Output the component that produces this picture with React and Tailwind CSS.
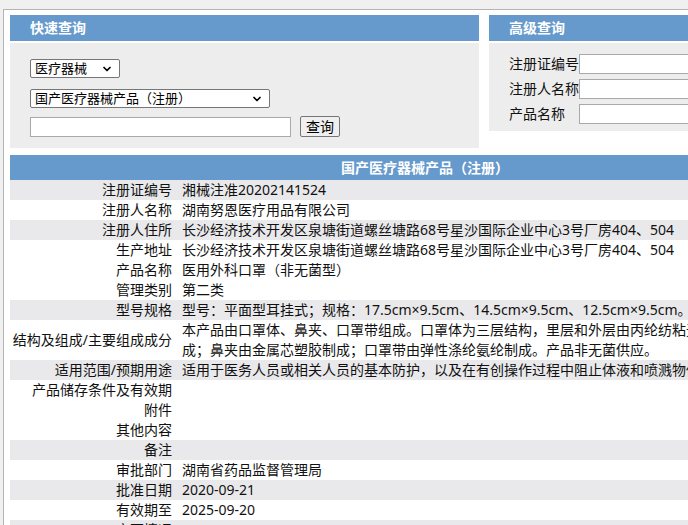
import React from 'react';
import { ChevronDown } from 'lucide-react';

const rows = [
  { label: '注册证编号', value: '湘械注准20202141524', gray: true },
  { label: '注册人名称', value: '湖南努恩医疗用品有限公司' },
  { label: '注册人住所', value: '长沙经济技术开发区泉塘街道螺丝塘路68号星沙国际企业中心3号厂房404、504', gray: true },
  { label: '生产地址', value: '长沙经济技术开发区泉塘街道螺丝塘路68号星沙国际企业中心3号厂房404、504' },
  { label: '产品名称', value: '医用外科口罩（非无菌型）' },
  { label: '管理类别', value: '第二类' },
  { label: '型号规格', value: '型号：平面型耳挂式；规格：17.5cm×9.5cm、14.5cm×9.5cm、12.5cm×9.5cm。', gray: true },
  {
    label: '结构及组成/主要组成成分',
    lines: [
      '本产品由口罩体、鼻夹、口罩带组成。口罩体为三层结构，里层和外层由丙纶纺粘无纺布制成，中间层由熔喷布制',
      '成；鼻夹由金属芯塑胶制成；口罩带由弹性涤纶氨纶制成。产品非无菌供应。',
    ],
  },
  { label: '适用范围/预期用途', value: '适用于医务人员或相关人员的基本防护，以及在有创操作过程中阻止体液和喷溅物传播。', gray: true },
  { label: '产品储存条件及有效期', value: '' },
  { label: '附件', value: '' },
  { label: '其他内容', value: '' },
  { label: '备注', value: '', gray: true },
  { label: '审批部门', value: '湖南省药品监督管理局' },
  { label: '批准日期', value: '2020-09-21', gray: true },
  { label: '有效期至', value: '2025-09-20' },
  { label: '变更情况', value: '', gray: true },
];

const FakeSelect = ({ text, width }) => (
  <div className={`${width} h-[19px] flex items-center justify-between border border-[#767676] rounded-[2px] bg-white pl-[4px] pr-[6px] text-[13px] leading-none text-black`}>
    <span>{text}</span>
    <ChevronDown size={12} strokeWidth={3.5} className="text-black" />
  </div>
);

export default function App() {
  return (
    <div
      className="min-h-screen bg-[#f0f0f0] pt-[9px] pl-[3px] overflow-hidden text-[#111]"
      style={{ fontFamily: '"Noto Sans", "Noto Sans CJK SC", sans-serif' }}
    >
      <div className="bg-white border-l border-t border-[#b4b4b4] pl-[6px] pt-[5px] w-[1000px] min-h-[520px]">
        <div className="flex items-start gap-[10px]">
          {/* 快速查询 */}
          <div className="w-[469px]">
            <div className="h-[26px] bg-[#6699cc] text-white font-bold text-[14px] leading-[26px] pl-[20px]">快速查询</div>
            <div className="mt-[2px] h-[105px] bg-[#ededed] px-[20px] pt-[16px]">
              <FakeSelect text="医疗器械" width="w-[90px]" />
              <div className="mt-[11px]">
                <FakeSelect text="国产医疗器械产品（注册）" width="w-[240px]" />
              </div>
              <div className="mt-[8px] flex items-center gap-[9px]">
                <input className="w-[261px] h-[20px] border border-[#a9a9a9] bg-white outline-none" />
                <button className="h-[21px] px-[5px] border border-[#767676] rounded-[2px] bg-[#efefef] text-[14px] leading-none text-black">查询</button>
              </div>
            </div>
          </div>

          {/* 高级查询 */}
          <div className="w-[400px]">
            <div className="h-[26px] bg-[#6699cc] text-white font-bold text-[14px] leading-[26px] pl-[20px]">高级查询</div>
            <div className="mt-[2px] h-[88px] bg-[#ededed] pl-[20px] pt-[11px] flex flex-col gap-[5px]">
              {['注册证编号', '注册人名称', '产品名称'].map((l) => (
                <div key={l} className="flex items-center">
                  <span className="w-[70px] text-[14px] leading-[20px] whitespace-nowrap">{l}</span>
                  <input className="flex-1 h-[20px] border border-[#a9a9a9] bg-white outline-none" />
                </div>
              ))}
            </div>
          </div>
        </div>

        {/* 详情表 */}
        <div className="mt-[7px] w-[830px] text-[14px]">
          <div className="h-[25px] bg-[#6699cc] text-white font-bold text-center leading-[25px]">国产医疗器械产品（注册）</div>
          {rows.map((r) => (
            <div key={r.label} className={`flex ${r.gray ? 'bg-[#e9e9eb]' : 'bg-white'}`}>
              <div className="w-[167px] shrink-0 pr-[5px] flex items-center justify-end leading-[20px] whitespace-nowrap">{r.label}</div>
              <div className="flex-1 pl-[5px] leading-[20px] whitespace-nowrap overflow-hidden min-h-[20px]">
                {r.lines ? r.lines.map((l) => <div key={l}>{l}</div>) : r.value}
              </div>
            </div>
          ))}
        </div>
      </div>
    </div>
  );
}
